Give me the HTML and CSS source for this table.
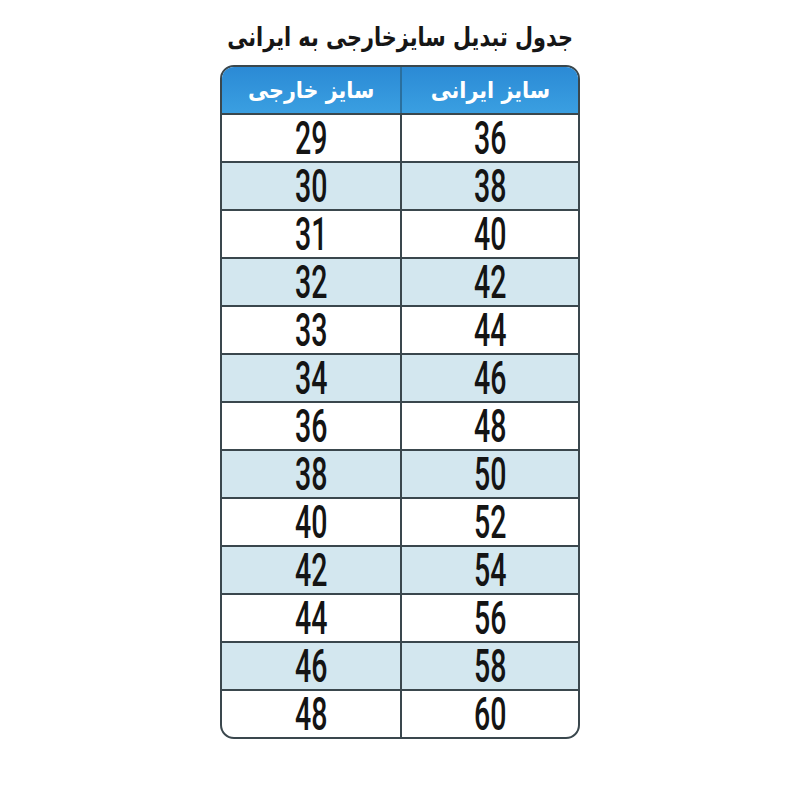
FILE: index.html
```html
<!DOCTYPE html>
<html lang="fa" dir="rtl">
<head>
<meta charset="utf-8">
<title>جدول تبدیل سایز</title>
<link rel="stylesheet" href="styles.css">
</head>
<body>
<div class="wrap">
  <h1 class="title"><span class="title-text">جدول تبدیل سایزخارجی به ایرانی</span></h1>
  <div class="table">
    <div class="row head"><div class="cell"><span class="head-text">سایز ایرانی</span></div><div class="cell"><span class="head-text">سایز خارجی</span></div></div>
    <div class="row"><div class="cell"><span class="num">36</span></div><div class="cell"><span class="num">29</span></div></div>
    <div class="row alt"><div class="cell"><span class="num">38</span></div><div class="cell"><span class="num">30</span></div></div>
    <div class="row"><div class="cell"><span class="num">40</span></div><div class="cell"><span class="num">31</span></div></div>
    <div class="row alt"><div class="cell"><span class="num">42</span></div><div class="cell"><span class="num">32</span></div></div>
    <div class="row"><div class="cell"><span class="num">44</span></div><div class="cell"><span class="num">33</span></div></div>
    <div class="row alt"><div class="cell"><span class="num">46</span></div><div class="cell"><span class="num">34</span></div></div>
    <div class="row"><div class="cell"><span class="num">48</span></div><div class="cell"><span class="num">36</span></div></div>
    <div class="row alt"><div class="cell"><span class="num">50</span></div><div class="cell"><span class="num">38</span></div></div>
    <div class="row"><div class="cell"><span class="num">52</span></div><div class="cell"><span class="num">40</span></div></div>
    <div class="row alt"><div class="cell"><span class="num">54</span></div><div class="cell"><span class="num">42</span></div></div>
    <div class="row"><div class="cell"><span class="num">56</span></div><div class="cell"><span class="num">44</span></div></div>
    <div class="row alt"><div class="cell"><span class="num">58</span></div><div class="cell"><span class="num">46</span></div></div>
    <div class="row"><div class="cell"><span class="num">60</span></div><div class="cell"><span class="num">48</span></div></div>
  </div>
</div>
</body>
</html>
```
FILE: styles.css
```css
html, body {
  margin: 0;
  padding: 0;
  background: #ffffff;
}
body {
  font-family: "DejaVu Sans", sans-serif;
}
.wrap {
  width: 360px;
  margin: 0 auto;
  padding-top: 18px;
}
.title {
  margin: 0 -40px 9px -40px;
  text-align: center;
  white-space: nowrap;
  font-family: "DejaVu Sans", "Noto Sans", sans-serif;
  font-weight: bold;
  font-size: 26px;
  line-height: 38px;
  color: #161616;
}
.title-text {
  display: inline-block;
  transform: scaleX(0.8);
}
.table {
  border: 2px solid #3a474d;
  border-radius: 14px;
  overflow: hidden;
  background: #ffffff;
}
.row {
  display: grid;
  grid-template-columns: 1fr 1fr;
  height: 48px;
  box-sizing: border-box;
  border-top: 2px solid #3a474d;
}
.row.head {
  border-top: none;
  height: 46px;
  background: linear-gradient(#2b8ad5, #3a9fe1);
  color: #ffffff;
}
.row.alt {
  background: #d3e7ef;
}
.cell {
  display: flex;
  align-items: center;
  justify-content: center;
}
.cell:first-child {
  border-left: 2px solid #3a474d;
}
.head .cell {
  border-left-color: #2a6f9e;
}
.head-text {
  display: inline-block;
  font-weight: bold;
  font-size: 23px;
  line-height: 30px;
  white-space: nowrap;
  transform: scaleX(0.9);
}
.num {
  display: inline-block;
  direction: ltr;
  font-family: Roboto, "Liberation Sans", sans-serif;
  font-weight: 500;
  font-size: 46px;
  line-height: 40px;
  color: #141414;
  transform: scaleX(0.62);
}
```
